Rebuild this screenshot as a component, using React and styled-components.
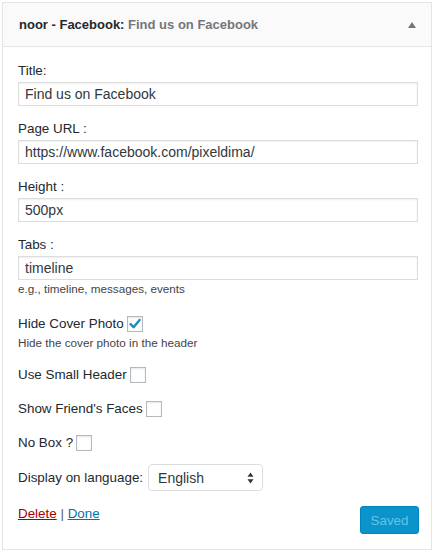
import React from "react";
import styled, { createGlobalStyle } from "styled-components";

const GlobalStyle = createGlobalStyle`
  html, body {
    margin: 0;
    padding: 0;
    background: #fff;
  }
  body {
    font-family: "Liberation Sans", Arial, sans-serif;
    color: #23282d;
  }
`;

const Widget = styled.div`
  width: 428px;
  margin: 2px 0 0 2px;
  border: 1px solid #e5e5e5;
  background: #fff;
  box-shadow: 0 1px 1px rgba(0, 0, 0, 0.04);
`;

const Header = styled.div`
  display: flex;
  align-items: center;
  justify-content: space-between;
  height: 43px;
  padding: 0 15px 0 16px;
  background: #fafafa;
  border-bottom: 1px solid #e5e5e5;
  font-size: 13px;
  font-weight: 700;
  color: #23282d;
`;

const Subtitle = styled.span`
  color: #72777c;
`;

const Arrow = styled.span`
  width: 0;
  height: 0;
  border-left: 4px solid transparent;
  border-right: 4px solid transparent;
  border-bottom: 6px solid #72777c;
`;

const Body = styled.div`
  display: flex;
  flex-direction: column;
  padding: 16px 11px 15px 15px;
`;

const Field = styled.div`
  display: flex;
  flex-direction: column;
  margin-bottom: ${(p) => p.$gap ?? 15}px;
`;

const Label = styled.label`
  font-size: 13.4px;
  line-height: 16px;
  margin-bottom: 3px;
  color: #23282d;
`;

const Input = styled.input`
  box-sizing: border-box;
  width: 400px;
  height: 24px;
  padding: 0 6px;
  border: 1px solid #ddd;
  box-shadow: inset 0 1px 2px rgba(0, 0, 0, 0.07);
  font-family: inherit;
  font-size: 14px;
  color: #32373c;
  outline: none;
`;

const Help = styled.div`
  font-size: 11.7px;
  line-height: 14px;
  color: #444;
  margin-top: ${(p) => p.$top ?? 2}px;
`;

const CheckRow = styled.div`
  display: flex;
  align-items: center;
  gap: 3px;
  min-height: 16px;
  font-size: 13.4px;
  line-height: 16px;
  color: #23282d;
`;

const Box = styled.span`
  box-sizing: border-box;
  display: inline-flex;
  align-items: center;
  justify-content: center;
  width: 16px;
  height: 16px;
  border: 1px solid #b4b9be;
  background: #fff;
  box-shadow: inset 0 1px 2px rgba(0, 0, 0, 0.1);
`;

const CheckGroup = styled.div`
  display: flex;
  flex-direction: column;
  margin-bottom: ${(p) => p.$gap ?? 18}px;
`;

const SelectRow = styled.div`
  display: flex;
  align-items: center;
  gap: 5px;
  font-size: 13.4px;
  color: #23282d;
  margin-bottom: 15px;
`;

const Select = styled.div`
  box-sizing: border-box;
  display: flex;
  align-items: center;
  justify-content: space-between;
  width: 115px;
  height: 27px;
  padding: 0 8px 0 9px;
  border: 1px solid #ddd;
  border-radius: 4px;
  background: #fff;
  font-size: 14px;
  color: #32373c;
`;

const Actions = styled.div`
  display: flex;
  justify-content: space-between;
  align-items: flex-start;
`;

const Links = styled.div`
  font-size: 13.4px;
  line-height: 16px;
  color: #555d66;
`;

const Link = styled.a`
  color: ${(p) => p.$color};
  text-decoration: underline;
  cursor: pointer;
`;

const SaveButton = styled.button`
  box-sizing: border-box;
  width: 59px;
  height: 28px;
  margin-right: 1px;
  border: 1px solid #0085ba;
  border-radius: 3px;
  background: #0a94cb;
  color: #66c3e6;
  font-family: inherit;
  font-size: 13.4px;
`;

const Check = () => (
  <svg width="14" height="14" viewBox="0 0 14 14">
    <path d="M2.5 7.2 L5.6 10.2 L11.6 3" fill="none" stroke="#1e8cbe" strokeWidth="2.4" strokeLinecap="round" strokeLinejoin="round" />
  </svg>
);

const Updown = () => (
  <svg width="7" height="12" viewBox="0 0 7 12">
    <path d="M3.5 0.5 L6.5 4.8 L0.5 4.8 Z M3.5 11.5 L6.5 7.2 L0.5 7.2 Z" fill="#333" />
  </svg>
);

const App = () => {
  return (
    <>
      <GlobalStyle />
      <Widget>
        <Header>
          <span>
            noor - Facebook: <Subtitle>Find us on Facebook</Subtitle>
          </span>
          <Arrow />
        </Header>
        <Body>
          <Field>
            <Label>Title:</Label>
            <Input defaultValue="Find us on Facebook" />
          </Field>
          <Field>
            <Label>Page URL :</Label>
            <Input defaultValue="https://www.facebook.com/pixeldima/" />
          </Field>
          <Field>
            <Label>Height :</Label>
            <Input defaultValue="500px" />
          </Field>
          <Field $gap={20}>
            <Label>Tabs :</Label>
            <Input defaultValue="timeline" />
            <Help>e.g., timeline, messages, events</Help>
          </Field>
          <CheckGroup $gap={17}>
            <CheckRow>
              Hide Cover Photo
              <Box>
                <Check />
              </Box>
            </CheckRow>
            <Help $top={4}>Hide the cover photo in the header</Help>
          </CheckGroup>
          <CheckGroup>
            <CheckRow>
              Use Small Header <Box />
            </CheckRow>
          </CheckGroup>
          <CheckGroup $gap={18}>
            <CheckRow>
              Show Friend's Faces <Box />
            </CheckRow>
          </CheckGroup>
          <CheckGroup $gap={13}>
            <CheckRow>
              No Box ? <Box />
            </CheckRow>
          </CheckGroup>
          <SelectRow>
            Display on language:
            <Select>
              English
              <Updown />
            </Select>
          </SelectRow>
          <Actions>
            <Links>
              <Link $color="#a00">Delete</Link> | <Link $color="#0073aa">Done</Link>
            </Links>
            <SaveButton disabled>Saved</SaveButton>
          </Actions>
        </Body>
      </Widget>
    </>
  );
};

export default App;
